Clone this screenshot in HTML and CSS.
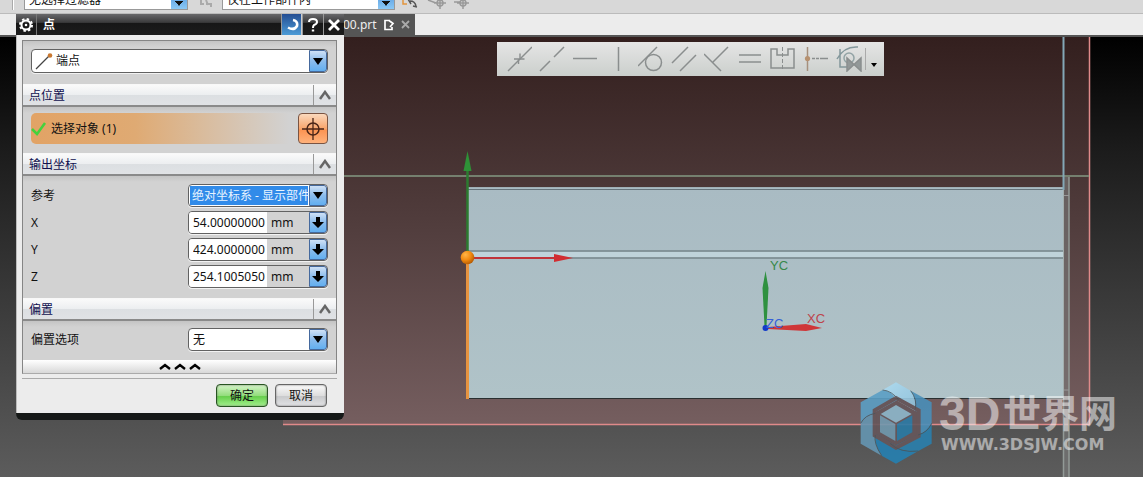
FILE: index.html
```html
<!DOCTYPE html>
<html lang="zh-CN">
<head>
<meta charset="utf-8">
<title>点</title>
<link rel="stylesheet" href="styles.css">
</head>
<body>
<div class="app">
  <header class="filterbar">
    <span class="grip"></span>
    <select class="filter filter-type" aria-label="过滤器"><option>无选择过滤器</option></select>
    <svg class="tool" width="16" height="12" viewBox="0 0 16 12"><path d="M3 1v5h3M8 2l2 5M8 6h5v3" fill="none" stroke="#aaa" stroke-width="2"/></svg>
    <select class="filter filter-scope" aria-label="范围"><option>仅在工作部件内</option></select>
    <svg class="tool tool-row" width="72" height="12" viewBox="0 0 72 12"><path d="M2 0v6h4" fill="none" stroke="#e2943c" stroke-width="1.5"/><path d="M7 1l3 5M9 3q5 0 6 5M12 8l4 1" fill="none" stroke="#555" stroke-width="1.5"/><g fill="none" stroke="#999" stroke-width="1.5"><path d="M27 2l8 3M39 0v11M33 5h12M53 4h6M62 0v11M56 5h12"/><circle cx="39" cy="5" r="3"/><circle cx="62" cy="5" r="3"/></g></svg>
  </header>
  <nav class="tabs">
    <div class="tab">
      <span>00.prt</span>
      <svg width="12" height="12" viewBox="0 0 12 12"><path d="M7 1.5H2v9h7V8M6 1.5l4 3-3 3.500" fill="none" stroke="#fff" stroke-width="1.700"/></svg>
      <button class="tab-close" aria-label="关闭标签"><svg width="10" height="10" viewBox="0 0 10 10"><path d="M1 1l7 7M8 1l-7 7" stroke="#aaa" stroke-width="1.800"/></svg></button>
    </div>
  </nav>

  <main class="viewport">
    <svg class="scene" viewBox="0 0 1143 442" preserveAspectRatio="xMinYMin slice">
      <defs>
        <linearGradient id="tint" x2="0" y2="1"><stop stop-color="#331f1e"/><stop offset=".5" stop-color="#523e3e"/><stop offset="1" stop-color="#755e5f"/></linearGradient>
        <linearGradient id="face" x2="0" y2="1"><stop stop-color="#a9bbc3"/><stop offset="1" stop-color="#b0c3c8"/></linearGradient>
        <radialGradient id="ball" cx=".35" cy=".3" r=".8"><stop stop-color="#ffb648"/><stop offset=".5" stop-color="#f18a10"/><stop offset="1" stop-color="#a95100"/></radialGradient>
        <linearGradient id="petal" x2="1" y2="1"><stop stop-color="#aedcf2"/><stop offset="1" stop-color="#8fc2dc"/></linearGradient>
      </defs>
      <rect x="283" y="2" width="806" height="387" fill="url(#tint)"/>
      <path d="M283 389.500H1089.500V2" fill="none" stroke="#e08a8a" stroke-width="1.500"/>
      <rect x="1063" y="141" width="6" height="301" fill="#7b7b7b" opacity=".6"/>
      <path d="M1063.500 363V442M1069 142V442" stroke="#929a97" stroke-width="1.500"/>
      <path d="M1063 160.500h6M1063 355h6" stroke="#999"/>
      <path d="M344 141H1089" stroke="#75806f" stroke-width="2"/>
      <rect x="468" y="152" width="595" height="211" fill="url(#face)"/>
      <path d="M468 152.500H1063" stroke="#9eafb5"/>
      <path d="M468 154.500H1063" stroke="#65737a"/>
      <path d="M468 219.500H1063" stroke="#bfd3da" stroke-width="6"/>
      <path d="M468 216H1063M468 223H1063" stroke="#75858a" stroke-width="1.500"/>
      <path d="M468 363.500H1063" stroke="#292f30"/>
      <path d="M1063.500 2V155" stroke="#83a7b6" stroke-width="2"/>
      <path d="M1063.500 155V363" stroke="#a3aead"/>
      <path d="M467.500 223V364" stroke="#e69340" stroke-width="3"/>
      <path d="M467.500 136V220" stroke="#2c7b30" stroke-width="2.500"/>
      <path d="M467.500 116l4 20h-8z" fill="#2e9237"/>
      <path d="M470 223H557" stroke="#c03439" stroke-width="2"/>
      <path d="M554 219l19 4-19 4z" fill="#d12d31"/>
      <circle cx="467.500" cy="222.500" r="6.800" fill="url(#ball)"/>
      <path d="M765.500 236l3 17-2 38h-2l-2-38z" fill="#2f9140"/>
      <path d="M768 292l38-3 16 4-16 3-38-2z" fill="#cf3638"/>
      <circle cx="765.500" cy="293" r="3" fill="#1239c9"/>
      <g class="axis-label"><text x="770" y="235" fill="#38884b">YC</text><text x="807" y="288" fill="#bd444c">XC</text><text x="766" y="293" fill="#3560d7">ZC</text></g>

      <g class="logo" transform="translate(840 335) scale(.3333)">
        <path d="M168 92L232 125V195L168 226L108 192V125Z" fill="#66575b"/>
        <path d="M128 60L168 37L212 62Q232 88 225 122L172 92Q150 60 128 60Z" fill="url(#petal)"/>
        <path d="M212 62L275 97V160Q262 188 232 195V125L225 122Q232 88 212 62Z" fill="#4a8fb9"/>
        <path d="M275 160V221L235 243Q180 250 150 217L168 226L232 195Q262 188 275 160Z" fill="#2a80ad"/>
        <path d="M235 243L168 281L125 257Q100 220 108 192L150 217Q180 250 235 243Z" fill="#2680b1"/>
        <path d="M125 257L62 221V160Q75 135 108 130V192Q100 220 125 257Z" fill="#6596b2"/>
        <path d="M62 160V97L128 60Q155 62 172 92H168L108 125V130Q75 135 62 160Z" fill="#5b9fc5"/>
        <path d="M168 84L236 121V198L168 233L104 196V121Z" fill="none" stroke="#66575b" stroke-width="12"/>
        <path d="M128 60Q155 62 176 90M212 62Q232 88 226 118M275 160Q262 188 234 195M235 243Q180 250 150 220M125 257Q100 220 106 195M62 160Q75 135 106 130" fill="none" stroke="#47555d" stroke-width="2.500"/>
        <path d="M168 105L215 132L168 158L122 132Z" fill="#8db7cb"/>
        <path d="M120 136L166 162V213L120 187Z" fill="#7199af"/>
        <path d="M217 136L171 162V213L217 187Z" fill="#2a7aa5"/>
      </g>
      <g class="watermark">
        <text class="mark-latin" x="939" y="395">3D</text>
        <text class="mark-cjk" x="1003" y="392">世界网</text>
        <text class="mark-url" x="941" y="415">WWW.3DSJW.COM</text>
      </g>
    </svg>

    <div class="sketchbar" role="toolbar" aria-label="约束">
      <button aria-label="重合"><svg viewBox="0 0 26 26"><path d="M2 25L26 1"/><path d="M8 13h4.500v5M18.500 13H14V7.500" stroke-width="1.400"/></svg></button>
      <button aria-label="共线"><svg viewBox="0 0 26 26"><path d="M1 25l10-10M15 11L25 1"/></svg></button>
      <button aria-label="水平"><svg viewBox="0 0 26 26"><path d="M1 12.500h24"/></svg></button>
      <button aria-label="竖直"><svg viewBox="0 0 26 26"><path d="M13.500 1v24"/></svg></button>
      <button aria-label="相切"><svg viewBox="0 0 26 26"><path d="M0 20L19 1"/><circle cx="15.500" cy="16.500" r="8"/></svg></button>
      <button aria-label="平行"><svg viewBox="0 0 26 26"><path d="M1 17L17 1M9 25L25 9"/></svg></button>
      <button aria-label="垂直"><svg viewBox="0 0 26 26"><path d="M9 16L24 1M0 8l17 17"/></svg></button>
      <button aria-label="等长"><svg viewBox="0 0 26 26"><path d="M2 9h22M2 16h22"/></svg></button>
      <button aria-label="对称"><svg viewBox="0 0 26 26"><path d="M1 3h6v6h11V3h6v19H1z"/><path d="M12.500 1v23" stroke-dasharray="4 2" stroke-width="1"/></svg></button>
      <button aria-label="中点"><svg viewBox="0 0 26 26"><path d="M4.500 1v24" stroke="#a6907d"/><circle cx="4.500" cy="12.500" r="2.600" fill="#b69170" stroke="none"/><path d="M9 12.500h16" stroke-dasharray="3 1 3 1 8"/></svg></button>
      <button aria-label="自动约束"><svg viewBox="0 0 26 26"><path d="M4 3v18h7M1 13Q8 0 22 1" stroke="#83979b"/><circle cx="13" cy="12" r="5" stroke="#92a3a5"/><path d="M11 12v13l14-13v13z" fill="#929898"/></svg></button>
      <button class="more" aria-label="更多"><svg class="more-icon" viewBox="0 0 8 6"><path d="M1 1h6L4 5z" fill="#000" stroke="none"/></svg></button>
    </div>
  </main>

  <form class="dialog" aria-labelledby="title">
    <header class="titlebar">
      <button type="button" class="gear" aria-label="设置"><svg width="16" height="16" viewBox="0 0 16 16"><circle cx="8" cy="8" r="4.500" fill="none" stroke="#fff" stroke-width="2"/><circle cx="8" cy="8" r="6" fill="none" stroke="#fff" stroke-width="2" stroke-dasharray="2.400 2.310"/><circle cx="8" cy="8" r="1.300" fill="#fff"/></svg></button>
      <h1 id="title">点</h1>
      <button type="button" class="reset" aria-label="重置"><svg width="14" height="14" viewBox="0 0 14 14"><path d="M8 2q5 1 4 6-3 5-9 1.500" fill="none" stroke="#fff" stroke-width="2.600"/></svg></button>
      <button type="button" aria-label="帮助"><svg width="12" height="14" viewBox="0 0 12 14"><path d="M2 4q0-3 4-3t4 3q0 2-3 3-1 1-1 3" fill="none" stroke="#fff" stroke-width="2"/><path d="M6 11.500v2" stroke="#fff" stroke-width="2.400"/></svg></button>
      <button type="button" aria-label="关闭"><svg width="12" height="12" viewBox="0 0 12 12"><path d="M1 1l10 10M11 1L1 11" stroke="#fff" stroke-width="2.800"/></svg></button>
    </header>

    <div class="content">
      <div class="panel">
        <div class="body body-type">
          <div class="combo combo-type">
            <svg width="18" height="18" viewBox="0 0 18 18"><path d="M1 16L15 2" stroke="#444" stroke-width="1.200"/><circle cx="15" cy="2.500" r="2.300" fill="#c97830"/></svg>
            <select aria-label="类型"><option>端点</option></select>
            <span class="arrow"><svg width="10" height="7" viewBox="0 0 10 7"><path d="M0 0h10L5 7z"/></svg></span>
          </div>
        </div>

        <h2><span>点位置</span><button type="button" aria-label="折叠点位置"><svg width="12" height="10" viewBox="0 0 12 10"><path d="M1 9l5-7 5 7" fill="none" stroke="#666" stroke-width="2.500"/></svg></button></h2>
        <div class="body body-pick">
          <div class="pick">
            <svg width="16" height="14" viewBox="0 0 16 14"><path d="M1 7l5 5 8-11" fill="none" stroke="#45d23d" stroke-width="2.500"/></svg>
            <label for="pick">选择对象 (1)</label>
            <button type="button" id="pick" class="target"><svg width="22" height="22" viewBox="0 0 22 22"><path d="M11 0v22M0 11h22" stroke="#4a2517" stroke-width="1.300"/><circle cx="11" cy="11" r="6" fill="none" stroke="#4a2517" stroke-width="1.500"/></svg></button>
          </div>
        </div>

        <h2><span>输出坐标</span><button type="button" aria-label="折叠输出坐标"><svg width="12" height="10" viewBox="0 0 12 10"><path d="M1 9l5-7 5 7" fill="none" stroke="#666" stroke-width="2.500"/></svg></button></h2>
        <div class="body body-coords">
          <div class="row"><label for="ref">参考</label>
            <div class="combo combo-active"><select id="ref"><option>绝对坐标系 - 显示部件</option></select><span class="arrow"><svg width="10" height="7" viewBox="0 0 10 7"><path d="M0 0h10L5 7z"/></svg></span></div></div>
          <div class="row"><label for="x">X</label>
            <div class="combo measure"><input id="x" value="54.00000000"><span class="unit">mm</span><button type="button" class="arrow" aria-label="X 选项"><svg width="12" height="12" viewBox="0 0 12 12"><path d="M4 0h4v5h4l-6 6-6-6h4z"/></svg></button></div></div>
          <div class="row"><label for="y">Y</label>
            <div class="combo measure"><input id="y" value="424.0000000"><span class="unit">mm</span><button type="button" class="arrow" aria-label="Y 选项"><svg width="12" height="12" viewBox="0 0 12 12"><path d="M4 0h4v5h4l-6 6-6-6h4z"/></svg></button></div></div>
          <div class="row"><label for="z">Z</label>
            <div class="combo measure"><input id="z" value="254.1005050"><span class="unit">mm</span><button type="button" class="arrow" aria-label="Z 选项"><svg width="12" height="12" viewBox="0 0 12 12"><path d="M4 0h4v5h4l-6 6-6-6h4z"/></svg></button></div></div>
        </div>

        <h2><span>偏置</span><button type="button" aria-label="折叠偏置"><svg width="12" height="10" viewBox="0 0 12 10"><path d="M1 9l5-7 5 7" fill="none" stroke="#666" stroke-width="2.500"/></svg></button></h2>
        <div class="body body-offset">
          <div class="row"><label for="offset">偏置选项</label>
            <div class="combo"><select id="offset"><option>无</option></select><span class="arrow"><svg width="10" height="7" viewBox="0 0 10 7"><path d="M0 0h10L5 7z"/></svg></span></div></div>
        </div>
        <button type="button" class="fold" aria-label="收起"><svg width="42" height="7" viewBox="0 0 42 7"><path d="M1 6l5-4 5 4M16 6l5-4 5 4M31 6l5-4 5 4" fill="none" stroke="#000" stroke-width="2.400"/></svg></button>
      </div>
      <footer class="actions">
        <button type="submit" class="action ok">确定</button>
        <button type="button" class="action">取消</button>
      </footer>
    </div>
  </form>
</div>
</body>
</html>
```
FILE: styles.css
```css
* { box-sizing: border-box; }

body {
  margin: 0;
  font: 12px/16px "Noto Sans", "Noto Sans CJK SC", sans-serif;
  color: #111;
}

button, input, select { font: inherit; color: inherit; }

button {
  display: flex;
  align-items: center;
  justify-content: center;
  padding: 0;
  border: 0;
  background: none;
}

svg { display: block; flex: none; }

.app {
  position: relative;
  display: flex;
  flex-direction: column;
  min-height: 100vh;
  overflow: hidden;
}

/* Selection filter bar */
.filterbar {
  display: flex;
  align-items: flex-end;
  height: 14px;
  padding: 0 0 3px 12px;
  overflow: hidden;
  background: #d8d8d8;
  border-bottom: 1px solid #bbb;
}

.grip { width: 2px; height: 10px; margin-right: 10px; border-left: 1px solid #aaa; background: #fff; }

.filter {
  flex: none;
  height: 20px;
  padding: 0 4px;
  appearance: none;
  border: 1px solid #999;
  border-radius: 0;
  background: linear-gradient(#4f93dc, #8ac8f5) right / 16px 100% no-repeat #fff;
}

.filter-type { width: 164px; }
.filter-scope { width: 173px; }

/* Drop arrow over the blue end of each filter */
.filter {
  background:
    conic-gradient(from -45deg at 50% 100%, #111 90deg, transparent 0) right 4px bottom 3px / 0 0 no-repeat,
    linear-gradient(45deg, transparent 50%, #111 50%) right 8px bottom 2px / 4px 4px no-repeat,
    linear-gradient(#4f93dc, #8ac8f5) right / 16px 100% no-repeat #fff;
  background:
    linear-gradient(to bottom left, #111 50%, transparent 52%) right 8px bottom 3px / 4px 5px no-repeat,
    linear-gradient(to bottom right, #111 50%, transparent 52%) right 4px bottom 3px / 4px 5px no-repeat,
    linear-gradient(#4f93dc, #8ac8f5) right / 16px 100% no-repeat #fff;
}
.tool { margin: 0 8px 0 10px; }
.tool-row { margin-left: 6px; }

/* Part tabs */
.tabs { display: flex; height: 21px; padding-left: 338px; background: #ececec; }

.tab {
  display: flex;
  align-items: center;
  gap: 6px;
  width: 77px;
  padding-left: 5px;
  background: #555;
  color: #eee;
}

/* Graphics window */
.viewport {
  position: relative;
  flex: 1;
  border-top: 2px solid #555;
  background: linear-gradient(#000, #1b1b1b 25%, #3a3a3a 60%, #5c5c5c);
}

.scene { position: absolute; top: -2px; left: 0; width: 100%; height: calc(100% + 2px); }

.axis-label { font: 13px "Liberation Sans", sans-serif; }
.logo { opacity: 0.9; }
.watermark { fill: #fff; opacity: 0.5; }
.mark-latin { font: bold 48px "Liberation Sans", sans-serif; }
.mark-cjk { font: bold 38px "Noto Sans CJK SC", sans-serif; }
.mark-url { font: bold 16px "DejaVu Sans", sans-serif; }

.sketchbar {
  position: absolute;
  top: 5px;
  left: 497px;
  display: flex;
  height: 34px;
  padding: 0 3px 0 5px;
  background: linear-gradient(#e5e5e5, #cbcfcc);
}

.sketchbar button { width: 33px; }
.sketchbar svg { width: 26px; height: 26px; fill: none; stroke: #8a8e8e; stroke-width: 1.5; }
.sketchbar .more { width: 16px; margin: 6px 0; padding-top: 12px; border-left: 1px solid #aaa; }
.sketchbar .more-icon { width: 8px; height: 6px; }

/* Point dialog */
.dialog {
  position: absolute;
  top: 14px;
  left: 16px;
  width: 328px;
  border-bottom: 7px solid #161918;
  border-radius: 0 0 6px 6px;
  background: #ececec;
}

.titlebar {
  display: flex;
  height: 21px;
  background: linear-gradient(#68686a, #3b3b3c 40%, #171717 45%, #1c1c1c);
}

.titlebar button { width: 21px; border-left: 1px solid #999; }
.titlebar .gear { border-left: 0; border-right: 1px solid #777; }
.titlebar .reset { background: linear-gradient(#244e93, #4c9bd6); border-right: 1px solid #ccc; }
.titlebar h1 { flex: 1; margin: 0; padding-left: 6px; font-size: 12px; line-height: 22px; color: #fff; }

.content { padding: 5px 7px 6px 5px; border-left: 1px solid #bbb; }

.panel {
  border: 1px solid #858585;
  border-bottom-color: #aaa;
}

.body {
  padding: 8px;
  background: linear-gradient(#c4c4c4, #d2d2d2 6px);
}

.panel h2 {
  display: flex;
  height: 23px;
  margin: 0;
  border-top: 1px solid #f8f8f8;
  border-bottom: 2px solid #8a8a8a;
  background: linear-gradient(#fafafa, #eceef0 50%, #dcdfe2 52%, #e0e2e5);
  color: #10104f;
  font-size: 12px;
  font-weight: normal;
  line-height: 22px;
}

.panel h2 span { flex: 1; padding-left: 6px; }
.panel h2 button { width: 23px; border-left: 1px solid #999; }

.body-type { padding-bottom: 11px; }
.body-pick { padding: 6px 8px 9px; }
.body-coords { display: grid; gap: 4px; padding-bottom: 10px; }
.body-offset { padding: 7px 8px 9px; }

.row { display: flex; align-items: center; }
.row label { flex: 1; }
.row .combo { width: 140px; }

.combo {
  display: grid;
  grid-template-columns: 1fr 18px;
  height: 23px;
  border: 1px solid #626262;
  border-radius: 4px;
  background: #fff;
  box-shadow: 0 1px #f2f2f2;
  overflow: hidden;
}

.combo select {
  grid-area: 1 / 1 / 2 / -1;
  width: 100%;
  min-width: 0;
  padding: 0 18px 0 4px;
  appearance: none;
  border: 0;
  background: none;
}

.arrow {
  grid-row: 1;
  grid-column: -2;
  display: flex;
  align-items: center;
  justify-content: center;
  border: 1px solid #45699d;
  border-radius: 0 3px 3px 0;
  background: linear-gradient(#cfe1f6, #8bbcec 50%, #62aff0);
  pointer-events: none;
}

.combo-type { height: 24px; grid-template-columns: 24px 1fr 18px; }
.combo-type > svg { grid-area: 1 / 1; margin: 3px 0 0 3px; }
.combo-type select { padding-left: 24px; }

.combo-active select {
  margin: 1px 0;
  padding-left: 3px;
  background: linear-gradient(#318be9, #318be9) 1px 0 / calc(100% - 20px) 100% no-repeat;
  color: #e8f4ff;
}

.measure { grid-template-columns: 78px 1fr 18px; background: #d2d2d2; }
.measure input { min-width: 0; padding: 0 0 0 4px; border: 0; background: #fff; }
.measure .arrow { pointer-events: auto; }
.unit { padding: 3px 0 0 4px; }

.pick {
  display: flex;
  align-items: center;
  height: 31px;
  border-radius: 5px;
  background: linear-gradient(90deg, #e2a365, #dfaa73 35%, #d2d2d2 87%);
}

.pick label { flex: 1; padding-left: 4px; }

.target {
  width: 30px;
  height: 31px;
  border: 1px solid #7a5442;
  border-radius: 4px;
  background: linear-gradient(#fbd9bd, #f9a56c 50%, #fb9352 55%, #ffb27b);
}

.fold {
  width: 100%;
  height: 13px;
  background: linear-gradient(#fff, #d8d8d8);
}

.actions {
  display: flex;
  justify-content: flex-end;
  gap: 7px;
  margin-top: 4px;
  padding: 5px 10px 0 0;
  border-top: 1px solid #aaa;
}

.action {
  width: 52px;
  height: 23px;
  border: 1px solid #666;
  border-radius: 4px;
  background: linear-gradient(#fafafa, #dedede 50%, #c9cacc 55%, #e2e3e5);
  box-shadow: inset 0 0 2px #666;
}

.ok {
  border-color: #275421;
  background: linear-gradient(#d4f4c7, #94dd7e 50%, #66cf4c 55%, #a2f08c);
}
```
